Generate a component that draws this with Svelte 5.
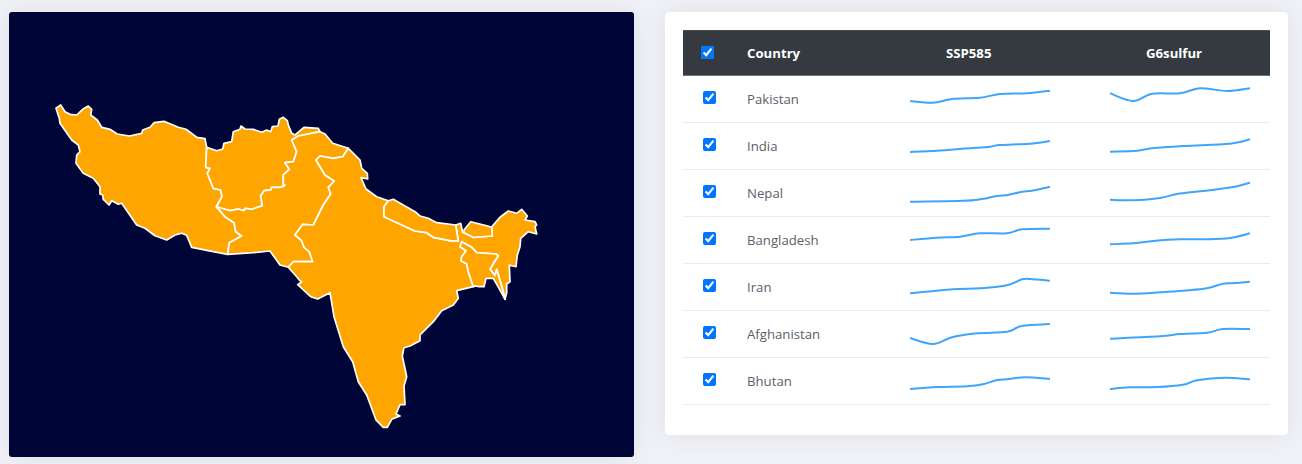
<script>
  // Outline traces: each run is "x,y x,y ..." in a local frame offset by [ox, oy].
  const pts = (s, ox, oy) =>
    s.trim().split(/\s+/).map((p) => {
      const [x, y] = p.split(',').map(Number);
      return `${(ox + x / 3).toFixed(1)},${(oy + y / 3).toFixed(1)}`;
    }).join(' ');
  const A = (s) => pts(s, 31, 78);
  const B = (s) => pts(s, 271, 98);
  const C = (s) => pts(s, 271, 268);

  const shapes = [
    A('48,55 62,45 75,65 90,73 110,75 128,58 145,48 155,58 152,75 172,90 185,112 210,118 232,132 268,138 305,130 308,120 330,112 342,98 372,94 415,112 438,118 470,142 495,146 500,172 497,232 510,235 502,250 520,295 542,300 546,320 528,350 555,380 582,398 587,425 605,438 568,458 563,493 520,485 455,472 440,436 425,430 405,435 380,450 345,437 315,415 290,405 245,340 235,343 215,332 207,345 190,328 188,315 180,312 180,290 160,265 130,250 108,220 110,195 120,185 115,165 95,150 60,100 58,85'),
    A('500,172 530,182 548,177 552,160 575,155 580,125 600,118 603,108 615,117 640,118 665,127 680,120 692,125 697,110 714,108 718,88 730,82 742,92 745,105 755,130 765,135') + ' ' +
      B('72,52 115,55 120,65 55,78 35,90 50,125 40,155 15,158 28,178 10,195 10,230') + ' ' +
      A('735,285 722,292 695,292 692,300 672,302 662,318 667,347 635,358 615,355 612,362 595,357 570,362 530,350 546,320 542,300 520,295 502,250 510,235 497,232'),
    A('530,350 570,362 595,357 612,362 615,355 635,358 667,347 662,318 672,302 692,300 695,292 722,292 735,285') + ' ' +
      B('10,230 10,195 28,178 15,158 40,155 50,125 35,90 55,78 120,65 135,72 158,100 205,115 188,140 160,145 120,138 108,150 135,195 163,213 145,232 152,252 130,285 100,345 68,343 45,375 65,392 72,412 88,425 98,455 40,455 25,472') + ' ' +
      A('720,525 690,483 640,488 563,493 568,458 605,438 587,425 582,398 555,380'),
    B('205,115 240,150 245,175 262,190 263,207 243,203 258,237 290,260 325,272 312,290 312,320 380,352 405,363 440,368 460,382 510,392 535,393 527,345 542,340 548,368 552,368 580,382 637,378 635,352 640,345 660,322 685,303 710,310 725,298 742,318 735,330 765,335 770,345 765,350 770,372 745,365 722,385 720,410 712,435 708,470 688,465 690,515 680,522 680,548 675,568 668,540 650,478 645,495 630,478 655,437 648,432 590,428 575,412 545,395 540,410 558,422 545,440 543,452 560,462 565,485 580,530 530,542 535,565 520,585') + ' ' +
      C('485,92 460,125 420,165 420,182 390,198 372,203 367,228 380,290 372,318 375,374 360,374 348,402 360,408 335,418 322,442 310,442 288,420 260,345 235,305 218,245 190,200 162,110 150,38 113,57 92,50 53,14 65,5 58,0') + ' ' +
      B('50,500 25,472 40,455 98,455 88,425 72,412 65,392 45,375 68,343 100,345 130,285 152,252 145,232 163,213 135,195 108,150 120,138 160,145 188,140'),
    B('325,272 340,268 405,305 420,318 445,325 470,338 527,345 535,393 510,392 460,382 440,368 405,363 380,352 312,320 312,290'),
    B('552,360 572,335 620,347 635,352 637,378 580,382 552,368'),
    B('545,395 575,412 590,428 648,432 655,437 640,460 630,478 645,497 650,478 668,540 675,568 660,540 640,505 618,505 612,530 598,530 585,528 580,530 565,485 560,462 543,452 545,440 558,422 540,410')
  ];

  const rows = [
    { name: 'Pakistan', top: 76,
      a: [[910,101],[933,102.7],[952,99],[980,97.7],[1000,94],[1028,93.3],[1050,90.7]],
      b: [[1110,93.3],[1133,101],[1152,93.7],[1180,93.3],[1200,88.3],[1227,91],[1250,88.3]] },
    { name: 'India', top: 123,
      a: [[910,152],[937,150.7],[965,148.5],[990,146.7],[1000,145],[1030,143.7],[1050,141]],
      b: [[1110,151.7],[1137,150.7],[1152,148.3],[1183,146],[1230,143.7],[1250,139.3]] },
    { name: 'Nepal', top: 170,
      a: [[910,201.7],[963,200.7],[980,199.3],[997,196],[1008,195],[1022,191.7],[1032,190.7],[1050,186.7]],
      b: [[1110,199.7],[1133,200.3],[1160,198],[1177,194],[1200,191.3],[1232,187.3],[1250,182.7]] },
    { name: 'Bangladesh', top: 217,
      a: [[910,240],[937,237.7],[960,236.7],[980,233.3],[1007,233.3],[1022,229.3],[1050,228.7]],
      b: [[1110,244.3],[1137,243],[1153,241],[1180,239.3],[1207,239.3],[1230,238],[1250,233.3]] },
    { name: 'Iran', top: 264,
      a: [[910,293.3],[953,289.3],[980,288.3],[1007,285.3],[1022,279.3],[1030,279],[1050,280.7]],
      b: [[1110,292.7],[1133,293.7],[1160,292.3],[1183,290.7],[1207,288.3],[1223,283.7],[1233,283.3],[1250,281.7]] },
    { name: 'Afghanistan', top: 311,
      a: [[910,338],[933,344],[952,337.3],[977,333.3],[1007,331.7],[1022,326],[1050,324]],
      b: [[1110,338.7],[1160,336.3],[1180,334],[1207,332.7],[1223,329],[1250,329]] },
    { name: 'Bhutan', top: 358,
      a: [[910,389],[937,387],[967,386.3],[983,384.3],[997,380],[1007,379.3],[1025,377.3],[1050,379]],
      b: [[1110,389],[1130,387.3],[1157,387],[1183,384.7],[1197,380.3],[1225,377.7],[1250,379.3]] }
  ];

  // Smooth line through the samples (Catmull-Rom to Bezier).
  function spark(data, x0, top) {
    const p = data.map(([x, y]) => [x - x0, y - top]);
    let d = `M${p[0][0]} ${p[0][1]}`;
    for (let i = 0; i < p.length - 1; i++) {
      const p0 = p[i - 1] || p[i], p1 = p[i], p2 = p[i + 1], p3 = p[i + 2] || p2;
      const c1 = [p1[0] + (p2[0] - p0[0]) / 6, p1[1] + (p2[1] - p0[1]) / 6];
      const c2 = [p2[0] - (p3[0] - p1[0]) / 6, p2[1] - (p3[1] - p1[1]) / 6];
      d += ` C${c1[0].toFixed(1)} ${c1[1].toFixed(1)} ${c2[0].toFixed(1)} ${c2[1].toFixed(1)} ${p2[0]} ${p2[1]}`;
    }
    return d;
  }
</script>

<div class="page">
  <section class="map-card">
    <svg class="map" viewBox="0 0 625 445" aria-label="Map of South Asia">
      {#each shapes as s}
        <polygon points={s} />
      {/each}
    </svg>
  </section>

  <section class="table-card">
    <table>
      <thead>
        <tr>
          <th class="check"><input type="checkbox" checked /></th>
          <th>Country</th>
          <th class="metric">SSP585</th>
          <th class="metric">G6sulfur</th>
        </tr>
      </thead>
      <tbody>
        {#each rows as r}
          <tr>
            <td class="check"><input type="checkbox" checked /></td>
            <td class="name">{r.name}</td>
            <td><svg class="spark" viewBox="0 0 141 46"><path d={spark(r.a, 910, r.top)} /></svg></td>
            <td><svg class="spark" viewBox="0 0 141 46"><path d={spark(r.b, 1110, r.top)} /></svg></td>
          </tr>
        {/each}
      </tbody>
    </table>
  </section>
</div>

<style>
  :global(body) {
    margin: 0;
    background: #f1f2f7;
    font-family: "Open Sans", "Noto Sans", sans-serif;
  }
  .page {
    display: flex;
    align-items: flex-start;
    gap: 31px;
    height: 464px;
    box-sizing: border-box;
    padding: 12px 14px 0 9px;
    overflow: hidden;
  }
  .map-card {
    width: 625px;
    height: 445px;
    flex: none;
    background: #000537;
    border-radius: 3px;
    box-shadow: 0 0 24px rgba(60, 65, 100, 0.1);
    overflow: hidden;
  }
  .map {
    display: block;
    width: 625px;
    height: 445px;
  }
  .map polygon {
    fill: #ffa500;
    stroke: #fff;
    stroke-width: 1.7;
    stroke-linejoin: round;
  }
  .table-card {
    width: 623px;
    height: 423px;
    flex: none;
    box-sizing: border-box;
    padding: 18px;
    background: #fff;
    border-radius: 4px;
    box-shadow: 0 0 24px rgba(60, 65, 100, 0.1);
  }
  table {
    width: 587px;
    table-layout: fixed;
    border-collapse: collapse;
    font-size: 13.2px;
  }
  th, td {
    box-sizing: border-box;
  }
  th:nth-child(1) { width: 64px; }
  th:nth-child(2) { width: 163px; }
  th:nth-child(3) { width: 200px; }
  thead tr {
    height: 45px;
    background: #343a40;
    border-top: 1px solid #454d55;
    border-bottom: 1px solid #6c757d;
  }
  th {
    padding: 0;
    color: #fff;
    font-weight: 700;
    text-align: left;
  }
  th.metric {
    padding-left: 36px;
  }
  th.check {
    padding: 0 0 2px 14px;
  }
  tbody tr {
    height: 47px;
    border-bottom: 1px solid #e9ecef;
  }
  td {
    padding: 0;
    vertical-align: middle;
  }
  td.check {
    padding: 0 0 4px 16px;
  }
  td.name {
    color: #5a6169;
  }
  input {
    display: block;
    width: 13px;
    height: 13px;
    margin: 0 0 0 4px;
    accent-color: #0075ff;
  }
  .spark {
    display: block;
    width: 141px;
    height: 46px;
  }
  .spark path {
    fill: none;
    stroke: #3fa5fb;
    stroke-width: 2;
  }
</style>
